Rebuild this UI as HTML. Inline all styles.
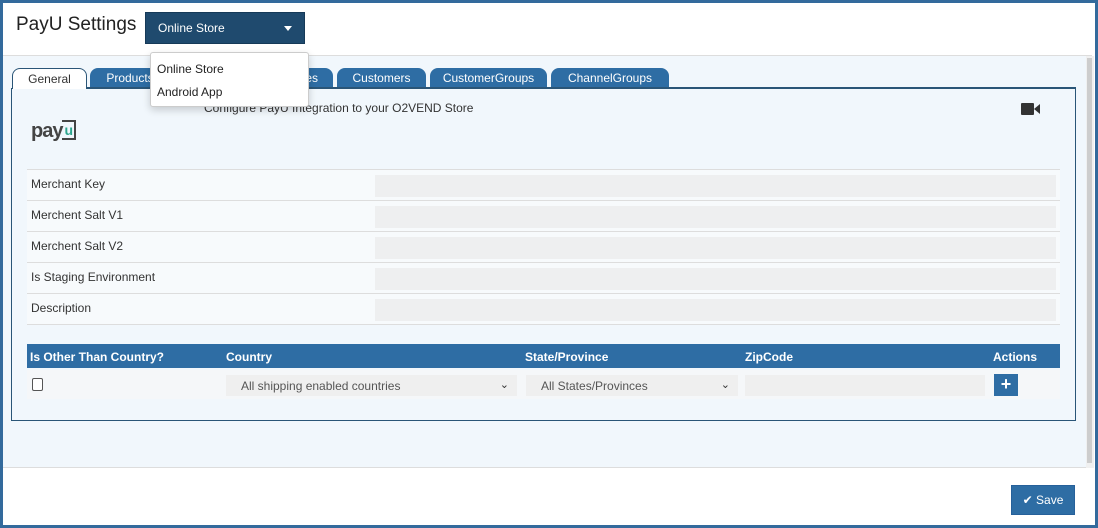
<!DOCTYPE html>
<html><head><style>
*{box-sizing:border-box;margin:0;padding:0}
body{width:1098px;height:528px;overflow:hidden;background:#fff;font-family:"Liberation Sans",sans-serif;font-size:12px;color:#333;position:relative}
.frame{position:absolute;inset:0;border:3px solid #336a9c}
.abs{position:absolute}
.hdr{left:3px;top:3px;width:1089px;height:53px;background:#fff;border-bottom:1px solid #ddd}
.body{left:3px;top:56px;width:1083px;height:412px;background:#f1f7fc;border-bottom:1px solid #ddd}
.tab{position:absolute;top:68px;height:20px;background:#2e6da4;color:#fff;border-radius:8px 8px 0 0;font-size:12px;text-align:center;line-height:20px}
.row{position:absolute;left:27px;width:1033px;height:31px;border-top:1px solid #ddd;background:#f7fafc}
.row span{position:absolute;left:4px;top:7px;font-size:12px;color:#333}
.row i{position:absolute;left:348px;top:5px;width:681px;height:22px;background:#eeeff0}
.th{position:absolute;top:350px;color:#fff;font-weight:bold;font-size:12px}
.sel{position:absolute;top:375px;height:21px;background:#efefef;font-size:12px;color:#555;padding:4px 0 0 15px}
.sel b{position:absolute;right:8px;top:3px;font-weight:normal;font-size:11px;color:#333}
</style></head><body>
<div class="abs hdr"></div>
<div class="abs body"></div>
<div class="abs" style="left:1086px;top:56px;width:8px;height:412px;background:#f0f0f0"></div>
<div class="abs" style="left:1087px;top:58px;width:5px;height:405px;background:#cdcdcd"></div>
<div class="abs" style="left:16px;top:14px;font-size:19px;color:#222">PayU Settings</div>
<div class="abs" style="left:145px;top:12px;width:160px;height:32px;background:#1f4a6e;border:1px solid #163a58;color:#fff;font-size:12px;padding:8px 0 0 12px">Online Store<span style="position:absolute;right:12px;top:13px;border:4px solid transparent;border-top:5px solid #fff"></span></div>
<div class="abs" style="top:88px;height:333px;border:1px solid #2a5577;background:#f1f7fc;left:11px;width:1065px"></div>
<div class="tab" style="left:12px;width:75px;background:#fff;color:#333;border:1px solid #2a5577;border-bottom:none;height:21px">General</div>
<div class="tab" style="left:90px;width:80px">Products</div>
<div class="tab" style="left:245px;width:88px">Categories</div>
<div class="tab" style="left:337px;width:89px">Customers</div>
<div class="tab" style="left:430px;width:117px">CustomerGroups</div>
<div class="tab" style="left:551px;width:118px">ChannelGroups</div>
<div class="abs" style="left:87px;top:87px;width:989px;height:1px;background:#2a5577"></div>
<div class="abs" style="left:204px;top:101px;font-size:12px;color:#333">Configure PayU Integration to your O2VEND Store</div>
<div class="abs" style="left:31px;top:120px;font-size:20px;font-weight:bold;color:#444;letter-spacing:-1px">pay<span style="display:inline-block;border:2px solid #444;border-left:none;color:#2ca58d;font-size:14px;padding:0 2px;line-height:16px;vertical-align:2px">u</span></div>
<svg class="abs" style="left:1021px;top:102px" width="20" height="14"><rect x="0" y="1" width="13" height="12" rx="1" fill="#333"/><path d="M13 7 L19 2 V12 Z" fill="#333"/></svg>
<div class="row" style="top:169px"><span>Merchant Key</span><i></i></div>
<div class="row" style="top:200px"><span>Merchent Salt V1</span><i></i></div>
<div class="row" style="top:231px"><span>Merchent Salt V2</span><i></i></div>
<div class="row" style="top:262px"><span>Is Staging Environment</span><i></i></div>
<div class="row" style="top:293px;border-bottom:1px solid #ddd;height:32px"><span>Description</span><i></i></div>
<div class="abs" style="left:27px;top:344px;width:1033px;height:24px;background:#2e6da4"></div>
<div class="th" style="left:30px">Is Other Than Country?</div>
<div class="th" style="left:226px">Country</div>
<div class="th" style="left:525px">State/Province</div>
<div class="th" style="left:745px">ZipCode</div>
<div class="th" style="left:993px">Actions</div>
<div class="abs" style="left:27px;top:370px;width:1033px;height:29px;background:#f5f7f9"></div>
<div class="abs" style="left:32px;top:378px;width:11px;height:13px;border:1px solid #555;border-radius:2px;background:#fff"></div>
<div class="sel" style="left:226px;width:291px">All shipping enabled countries<b>⌄</b></div>
<div class="sel" style="left:526px;width:212px">All States/Provinces<b>⌄</b></div>
<div class="sel" style="left:745px;width:240px"></div>
<div class="abs" style="left:994px;top:374px;width:24px;height:22px;background:#2e6da4;color:#fff;font-weight:bold;font-size:18px;text-align:center;line-height:21px">+</div>
<div class="abs" style="left:1011px;top:485px;width:64px;height:30px;background:#2e6da4;border:1px solid #26609a;color:#fff;font-size:12px;text-align:center;line-height:28px">✔ Save</div>
<div class="abs" style="left:150px;top:52px;width:159px;height:55px;background:#fff;border:1px solid #ccc;border-radius:3px;box-shadow:0 3px 8px rgba(0,0,0,.18)">
<div style="position:absolute;left:6px;top:9px;font-size:12px;color:#222">Online Store</div>
<div style="position:absolute;left:6px;top:32px;font-size:12px;color:#222">Android App</div></div>
<div class="frame"></div>
</body></html>
